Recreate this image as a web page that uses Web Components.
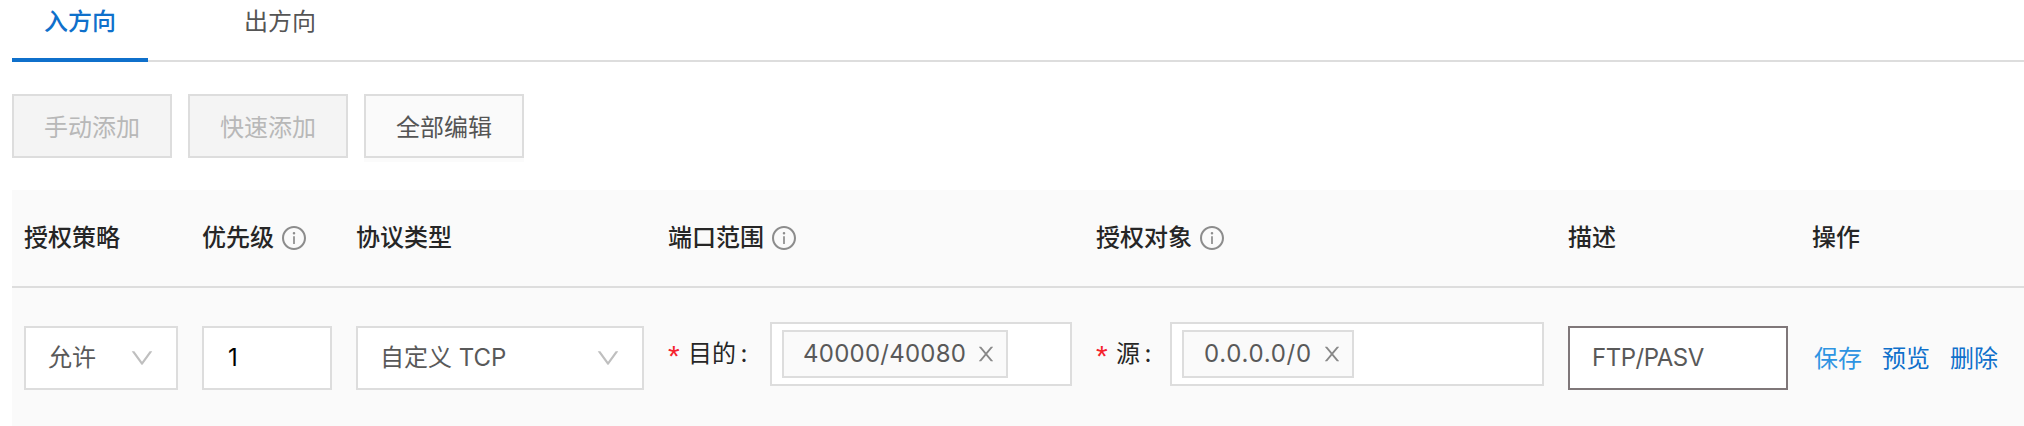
<!DOCTYPE html>
<html lang="zh-CN">
<head>
<meta charset="utf-8">
<title>安全组规则</title>
<style>
html,body{margin:0;padding:0;background:#fff}
body{height:426px;overflow:hidden;font:24px/36px Inter,"Noto Sans CJK SC",sans-serif;color:#555}
</style>
</head>
<body>
<rule-page></rule-page>
<script>
const define = (name, html) => customElements.define(name, class extends HTMLElement {
  constructor() {
    super();
    const t = document.createElement('template');
    t.innerHTML = html;
    this.attachShadow({mode: 'open'}).append(t.content.cloneNode(true));
  }
});

define('icon-info', `<style>:host{display:block;width:24px;height:24px;color:#8c8c8c}svg{display:block}</style>
<svg width="24" height="24" viewBox="64 64 896 896" fill="currentColor"><path d="M512 64C264.6 64 64 264.6 64 512s200.6 448 448 448 448-200.6 448-448S759.4 64 512 64zm0 820c-205.4 0-372-166.6-372-372s166.6-372 372-372 372 166.6 372 372-166.6 372-372 372z"/><path d="M464 336a48 48 0 1 0 96 0 48 48 0 1 0-96 0zm72 112h-48c-4.4 0-8 3.6-8 8v272c0 4.4 3.6 8 8 8h48c4.4 0 8-3.6 8-8V456c0-4.4-3.6-8-8-8z"/></svg>`);

define('icon-down', `<style>:host{display:block;width:24px;height:24px;color:#bfbfbf}svg{display:block}</style>
<svg width="24" height="24" viewBox="64 64 896 896" fill="currentColor"><path d="M884 256h-75c-5.1 0-9.9 2.5-12.9 6.6L512 654.2 227.9 262.6c-3-4.1-7.8-6.6-12.9-6.6h-75c-6.5 0-10.3 7.4-6.5 12.7l352.6 486.1c12.8 17.6 39 17.6 51.7 0l352.6-486.1c3.9-5.3.1-12.7-6.4-12.7z"/></svg>`);

define('icon-close', `<style>:host{display:block;width:20px;height:20px;color:#888}svg{display:block}</style>
<svg width="20" height="20" viewBox="64 64 896 896" fill="currentColor"><path d="M563.8 512l262.5-312.9c4.4-5.2.7-13.1-6.1-13.1h-79.8c-4.7 0-9.2 2.1-12.3 5.7L511.6 449.8 295.1 191.7c-3-3.6-7.5-5.7-12.3-5.7H203c-6.8 0-10.5 7.9-6.1 13.1L459.4 512 196.9 824.9A7.95 7.95 0 0 0 203 838h79.8c4.7 0 9.2-2.1 12.3-5.7l216.5-258.1 216.5 258.1c3 3.6 7.5 5.7 12.3 5.7h79.8c6.8 0 10.5-7.9 6.1-13.1L563.8 512z"/></svg>`);

define('tab-item', `<style>
:host{display:block;box-sizing:border-box;height:62px;padding:4px 32px 0;color:#555;white-space:nowrap}
:host([active]){color:#0f70cb;font-weight:500;border-bottom:4px solid #0f70cb}
</style><slot></slot>`);

define('tab-bar', `<style>
:host{display:flex;gap:64px;box-sizing:border-box;height:62px;margin-left:12px;background:linear-gradient(#ddd,#ddd) left bottom/100% 2px no-repeat}
</style><slot></slot>`);

define('tool-button', `<style>
:host{display:block;box-sizing:border-box;width:160px;height:64px;border:2px solid #ddd;background:#fafafa;box-shadow:0 4px 0 rgba(0,0,0,.016);text-align:center;line-height:63px;color:#555}
:host([disabled]){background:#f4f4f4;color:#b8b8b8;box-shadow:none}
</style><slot></slot>`);

define('head-cell', `<style>
:host{display:flex;align-items:center;gap:8px;padding:0 12px;color:#262626;font-weight:500;white-space:nowrap}
</style><span><slot></slot></span><slot name="icon"></slot>`);

define('select-box', `<style>
:host{display:flex;align-items:center;justify-content:space-between;box-sizing:border-box;height:64px;padding:0 22px 0 22px;border:2px solid #ddd;background:#fff;color:#595959;white-space:nowrap}
</style><span><slot></slot></span><icon-down></icon-down>`);

define('text-box', `<style>
:host{display:flex;align-items:center;box-sizing:border-box;height:64px;padding:0 24px;border:2px solid #ddd;background:#fff;color:#000}
:host([focused]){padding:0 22px;border-color:#7f7779;color:#595959;letter-spacing:-.5px}
</style><slot></slot>`);

define('tag-item', `<style>
:host{display:flex;align-items:center;justify-content:space-between;box-sizing:border-box;height:48px;padding:0 10px 0 var(--lead,19px);border:2px solid #ddd;background:#fafafa;color:#595959;white-space:nowrap}
span{letter-spacing:var(--track,.25px)}
</style><span><slot></slot></span><icon-close></icon-close>`);

define('tag-field', `<style>
:host{display:flex;height:64px;align-items:center}
.label{display:flex;flex:1;color:#262626;line-height:64px}
.star{width:20px;height:64px;color:#f5222d;font:30px/68px "Liberation Sans",sans-serif}
.colon{margin-left:4.5px}
.box{box-sizing:border-box;height:64px;width:var(--box);padding:6px 10px;border:2px solid #ddd;background:#fff;display:flex}
</style><div class="label"><span class="star">*</span><slot name="label"></slot><span class="colon">:</span></div><div class="box"><slot></slot></div>`);

define('action-link', `<style>:host{display:block;color:#0f70cb;white-space:nowrap}:host([hover]){color:#2e94e2}</style><slot></slot>`);

define('rule-page', `<style>
:host{display:block}
.tools{display:flex;gap:16px;padding:32px 0 32px 12px}
.table{margin-left:12px;background:#fafafa;height:236px}
.row{display:grid;grid-template-columns:178px 154px 312px 428px 472px 244px 1fr}
.head{height:96px;border-bottom:2px solid #ddd}
.head head-cell{height:95px}
.body>div{padding:38px 12px 0}
.body>.up{padding-top:34px}
.body>.acts{display:flex;gap:20px;padding:53px 0 0 14px}
</style>
<tab-bar><tab-item active>入方向</tab-item><tab-item>出方向</tab-item></tab-bar>
<div class="tools"><tool-button disabled>手动添加</tool-button><tool-button disabled>快速添加</tool-button><tool-button>全部编辑</tool-button></div>
<div class="table">
<div class="row head">
<head-cell>授权策略</head-cell><head-cell>优先级<icon-info slot="icon"></icon-info></head-cell><head-cell>协议类型</head-cell><head-cell>端口范围<icon-info slot="icon"></icon-info></head-cell><head-cell>授权对象<icon-info slot="icon"></icon-info></head-cell><head-cell>描述</head-cell><head-cell>操作</head-cell>
</div>
<div class="row body">
<div><select-box>允许</select-box></div>
<div><text-box>1</text-box></div>
<div><select-box>自定义 TCP</select-box></div>
<div class="up"><tag-field style="--box:302px"><span slot="label">目的</span><tag-item style="width:226px">40000/40080</tag-item></tag-field></div>
<div class="up"><tag-field style="--box:374px"><span slot="label">源</span><tag-item style="width:172px;--lead:20px;--track:.7px">0.0.0.0/0</tag-item></tag-field></div>
<div><text-box focused>FTP/PASV</text-box></div>
<div class="acts"><action-link hover>保存</action-link><action-link>预览</action-link><action-link>删除</action-link></div>
</div>
</div>`);
</script>
</body>
</html>
